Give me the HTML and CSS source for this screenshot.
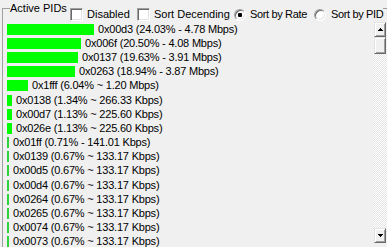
FILE: index.html
```html
<!DOCTYPE html>
<html>
<head>
<meta charset="utf-8">
<link rel="stylesheet" href="styles.css">
</head>
<body>
<fieldset class="group">
  <legend class="head">
    <div class="head-grid">
      <span class="title">Active PIDs</span>
      <label class="opt"><span class="check"></span><span class="lbl">Disabled</span></label>
      <label class="opt"><span class="check"></span><span class="lbl">Sort Decending</span></label>
      <label class="opt"><span class="radio on"></span><span class="lbl narrow">Sort by Rate</span></label>
      <label class="opt opt-pid"><span class="radio"></span><span class="lbl narrow">Sort by PID</span></label>
    </div>
  </legend>
  <div class="list">
    <div class="rows">
      <div class="row"><span class="bar" style="width:87px"></span><span class="txt">0x00d3 (24.03% - 4.78 Mbps)</span></div>
      <div class="row"><span class="bar" style="width:74px"></span><span class="txt">0x006f (20.50% - 4.08 Mbps)</span></div>
      <div class="row"><span class="bar" style="width:71px"></span><span class="txt">0x0137 (19.63% - 3.91 Mbps)</span></div>
      <div class="row"><span class="bar" style="width:68px"></span><span class="txt">0x0263 (18.94% - 3.87 Mbps)</span></div>
      <div class="row"><span class="bar" style="width:21px"></span><span class="txt">0x1fff (6.04% ~ 1.20 Mbps)</span></div>
      <div class="row"><span class="bar" style="width:5px"></span><span class="txt">0x0138 (1.34% ~ 266.33 Kbps)</span></div>
      <div class="row"><span class="bar" style="width:5px"></span><span class="txt">0x00d7 (1.13% ~ 225.60 Kbps)</span></div>
      <div class="row"><span class="bar" style="width:5px"></span><span class="txt">0x026e (1.13% ~ 225.60 Kbps)</span></div>
      <div class="row"><span class="bar thin" style="width:2px"></span><span class="txt">0x01ff (0.71% - 141.01 Kbps)</span></div>
      <div class="row"><span class="bar thin" style="width:2px"></span><span class="txt">0x0139 (0.67% ~ 133.17 Kbps)</span></div>
      <div class="row"><span class="bar thin" style="width:2px"></span><span class="txt">0x00d5 (0.67% ~ 133.17 Kbps)</span></div>
      <div class="row"><span class="bar thin" style="width:2px"></span><span class="txt">0x00d4 (0.67% ~ 133.17 Kbps)</span></div>
      <div class="row"><span class="bar thin" style="width:2px"></span><span class="txt">0x0264 (0.67% ~ 133.17 Kbps)</span></div>
      <div class="row"><span class="bar thin" style="width:2px"></span><span class="txt">0x0265 (0.67% ~ 133.17 Kbps)</span></div>
      <div class="row"><span class="bar thin" style="width:2px"></span><span class="txt">0x0074 (0.67% ~ 133.17 Kbps)</span></div>
      <div class="row"><span class="bar thin" style="width:2px"></span><span class="txt">0x0073 (0.67% ~ 133.17 Kbps)</span></div>
    </div>
    <div class="scroll">
      <div class="sbtn"><svg width="5" height="3" viewBox="0 0 5 3" shape-rendering="crispEdges"><rect x="2" y="0" width="1" height="1"/><rect x="1" y="1" width="3" height="1"/><rect x="0" y="2" width="5" height="1"/></svg></div>
      <div class="sbtn thumb"></div>
      <div class="track"></div>
      <div class="sbtn"><svg width="5" height="3" viewBox="0 0 5 3" shape-rendering="crispEdges"><rect x="0" y="0" width="5" height="1"/><rect x="1" y="1" width="3" height="1"/><rect x="2" y="2" width="1" height="1"/></svg></div>
    </div>
  </div>
</fieldset>
</body>
</html>
```
FILE: styles.css
```css
html, body {
  margin: 0;
  padding: 0;
  overflow: hidden;
  background: #f0f0f0;
}
body {
  font-family: "Liberation Sans", Arial, sans-serif;
  font-size: 11px;
  line-height: 13px;
  color: #000;
}
.group {
  box-sizing: border-box;
  margin: 0 0 0 2px;
  padding: 0;
  width: 392px;
  height: 250px;
  min-width: 0;
  border: 1px solid #a0a0a0;
  overflow: hidden;
}
.head {
  padding: 0;
  margin-left: 7px;
  height: 17px;
}
.head-grid {
  display: grid;
  grid-template-columns: 60px 67px 97px 80px auto;
  align-items: start;
  height: 17px;
}
.title {
  margin-top: 2px;
  white-space: nowrap;
}
.opt {
  display: flex;
  align-items: center;
  gap: 4px;
  margin-top: 8px;
  height: 13px;
  white-space: nowrap;
}
.opt-pid {
  gap: 5px;
}
.narrow {
  letter-spacing: -0.35px;
}
.check {
  flex: none;
  box-sizing: border-box;
  width: 13px;
  height: 13px;
  background: #fff;
  border: 1px solid;
  border-color: #a0a0a0 #fff #fff #a0a0a0;
  box-shadow: inset 1px 1px #696969, inset -1px -1px #e3e3e3;
}
.radio {
  flex: none;
  box-sizing: border-box;
  width: 12px;
  height: 12px;
  border-radius: 50%;
  background: #fff;
  border: 1px solid;
  border-color: #a0a0a0 #fff #fff #a0a0a0;
  box-shadow: inset 1px 1px #696969, inset -1px -1px #e3e3e3;
  display: flex;
  align-items: center;
  justify-content: center;
}
.radio.on::after {
  content: "";
  width: 4px;
  height: 4px;
  border-radius: 1px;
  background: #000;
}
.list {
  display: grid;
  grid-template-columns: 370px 14px;
  padding-top: 5px;
}
.rows {
  display: flex;
  flex-direction: column;
  padding-left: 4px;
}
.row {
  display: flex;
  align-items: center;
  gap: 4px;
  height: 14.2px;
  white-space: nowrap;
}
.txt {
  letter-spacing: -0.2px;
}
.bar {
  flex: none;
  height: 11px;
  background: #00ff00;
}
.bar.thin {
  background: #2fd23a;
}
.scroll {
  display: flex;
  flex-direction: column;
  height: 221px;
  background: repeating-conic-gradient(#ffffff 0 25%, #e4e4e4 0 50%) 0 0 / 2px 2px;
}
.sbtn {
  box-sizing: border-box;
  margin: 0 0 0 1px;
  width: 12px;
  height: 15px;
  background: #f0f0f0;
  border: 1px solid;
  border-color: #e3e3e3 #696969 #696969 #e3e3e3;
  box-shadow: inset 1px 1px #fff, inset -1px -1px #a0a0a0;
  display: flex;
  align-items: center;
  justify-content: center;
}
.sbtn svg {
  display: block;
  fill: #000;
}
.thumb {
  height: 17px;
}
.track {
  flex: 1;
}
```
